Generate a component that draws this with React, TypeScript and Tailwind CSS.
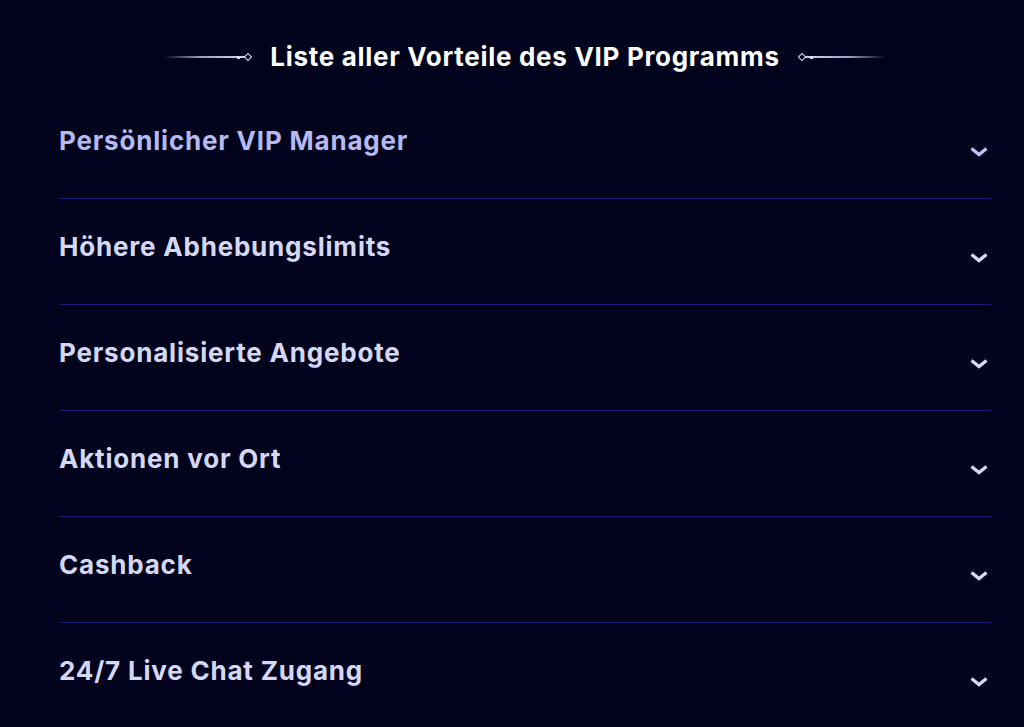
const perks = [
  "Persönlicher VIP Manager",
  "Höhere Abhebungslimits",
  "Personalisierte Angebote",
  "Aktionen vor Ort",
  "Cashback",
  "24/7 Live Chat Zugang",
];

const Chevron = ({ active }: { active: boolean }) => (
  <svg width="20" height="12" viewBox="0 0 20 12" className={active ? "text-[#bfc1f7]" : "text-[#d6d8f6]"}>
    <path d="M2.5 2.5 L10 8.5 L17.5 2.5" fill="none" stroke="currentColor" strokeWidth="3.4" strokeLinejoin="miter" />
  </svg>
);

const Ornament = ({ flip }: { flip?: boolean }) => (
  <div className={`flex items-center w-[87px] ${flip ? "flex-row-reverse" : ""}`}>
    <div
      className={`h-[2px] flex-1 ${
        flip ? "bg-gradient-to-l" : "bg-gradient-to-r"
      } from-transparent via-[#9a9cc8] to-[#c9cbf0]`}
    />
    <div className="w-[3px] h-[3px] bg-[#d8daf8]" />
    <div className="h-[2px] w-[5px] bg-[#c9cbf0]" />
    <div className="w-[6px] h-[6px] rotate-45 border border-[#d8daf8]" />
  </div>
);

export default function App() {
  return (
    <div className="min-h-[727px] bg-[#01031c] pl-[59px] pr-[33px] pt-[41px] font-['Inter',sans-serif] overflow-hidden">
      <div className="flex items-center justify-center gap-[19px] h-[32px]">
        <Ornament />
        <h2 className="text-white text-[26px] leading-[32px] font-bold tracking-[0.7px]">
          Liste aller Vorteile des VIP Programms
        </h2>
        <Ornament flip />
      </div>

      <div className="mt-[20px]">
        {perks.map((perk, i) => (
          <div
            key={perk}
            className="flex justify-between h-[106px] pt-[32px] border-b border-[#241477]"
          >
            <p
              className={`text-[26px] leading-[32px] font-bold tracking-[0.8px] ${
                i === 0 ? "text-[#b7b9f3]" : "text-[#d5d8f4]"
              }`}
            >
              {perk}
            </p>
            <div className="mt-[21px] mr-[2px]">
              <Chevron active={i === 0} />
            </div>
          </div>
        ))}
      </div>
    </div>
  );
}
